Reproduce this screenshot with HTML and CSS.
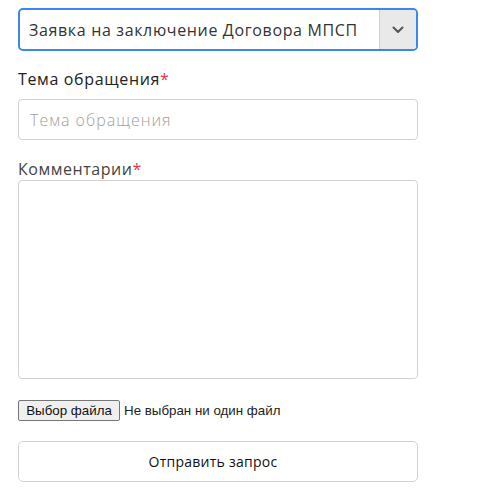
FILE: index.html
```html
<!DOCTYPE html>
<html lang="ru">
<head>
<meta charset="utf-8">
<link rel="stylesheet" href="styles.css">
</head>
<body>
<form class="form">
  <div class="select">
    <span class="select-value">Заявка на заключение Договора МПСП</span>
    <span class="select-arrow">
      <svg width="12" height="8" viewBox="0 0 12 8"><path d="M1.5 1.5 L6 6 L10.5 1.5" fill="none" stroke="#555" stroke-width="2" stroke-linecap="round" stroke-linejoin="round"/></svg>
    </span>
  </div>
  <label class="label label-strong">Тема обращения<span class="req">*</span></label>
  <input class="input" type="text" placeholder="Тема обращения">
  <label class="label label-light">Комментарии<span class="req">*</span></label>
  <textarea class="textarea"></textarea>
  <div class="file">
    <span class="file-btn">Выбор файла</span>
    <span class="file-text">Не выбран ни один файл</span>
  </div>
  <button class="submit" type="button">Отправить запрос</button>
</form>
</body>
</html>
```
FILE: styles.css
```css
* { box-sizing: border-box; }
body {
  margin: 0;
  padding: 8px 18px;
  background: #fff;
  font-family: "Open Sans", "DejaVu Sans", sans-serif;
  color: #222;
}
.form {
  width: 400px;
  display: flex;
  flex-direction: column;
}
.select {
  height: 43px;
  border: 2px solid #3b86f0;
  border-radius: 5px;
  display: flex;
  align-items: stretch;
  overflow: hidden;
}
.select-value {
  flex: 1;
  display: flex;
  align-items: center;
  padding-left: 9px;
  font-size: 16px;
  color: #333;
  letter-spacing: 0.65px;
}
.select-arrow {
  width: 37px;
  background: #e9e9e9;
  border-left: 1px solid #cfcfcf;
  display: flex;
  align-items: center;
  justify-content: center;
}
.label {
  font-size: 16px;
  line-height: 20px;
  color: #222;
}
.label-strong {
  margin-top: 18px;
  margin-bottom: 10px;
  font-weight: 500;
  letter-spacing: 0.65px;
}
.label-light {
  margin-top: 19px;
  margin-bottom: 1px;
  font-weight: 400;
  color: #444;
  letter-spacing: 0.55px;
}
.req { color: #e8344e; letter-spacing: 0; }
.input {
  height: 41px;
  border: 1px solid #d2d2d2;
  border-radius: 4px;
  padding: 0 11px;
  font-family: inherit;
  font-size: 16px;
  color: #333;
  outline: none;
}
.input::placeholder { color: #a0a0a0; font-weight: 300; letter-spacing: 1px; }
.textarea {
  height: 199px;
  border: 1px solid #d2d2d2;
  border-radius: 4px;
  resize: none;
  outline: none;
  font-family: inherit;
}
.file {
  margin-top: 21px;
  display: flex;
  align-items: center;
  gap: 4px;
  font-family: "Liberation Sans", Arial, sans-serif;
  font-size: 13.33px;
  color: #222;
}
.file-btn {
  height: 21px;
  width: 102px;
  display: flex;
  align-items: center;
  justify-content: center;
  background: #efefef;
  border: 1px solid #767676;
  border-radius: 2px;
  color: #111;
}
.submit {
  margin-top: 20px;
  height: 41px;
  border: 1px solid #d2d2d2;
  border-radius: 5px;
  background: #fff;
  font-family: inherit;
  font-size: 14px;
  color: #111;
  letter-spacing: 0.25px;
  padding: 0 10px 0 0;
  cursor: pointer;
}
```
